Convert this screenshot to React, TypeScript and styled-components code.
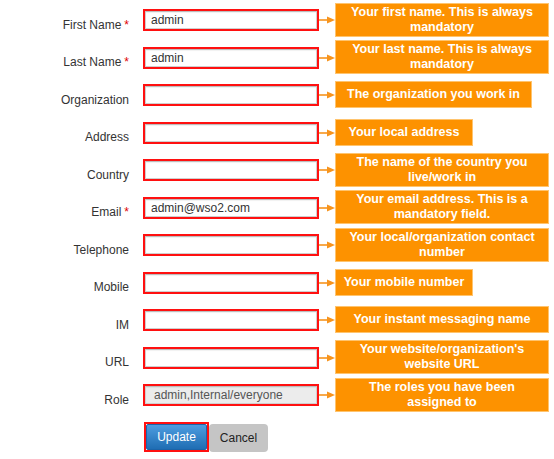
import React from "react";
import styled, { createGlobalStyle } from "styled-components";

const Global = createGlobalStyle`
  html, body { margin: 0; padding: 0; background: #fff; }
  body { font-family: "Liberation Sans", Arial, Helvetica, sans-serif; }
`;

const Page = styled.div`
  width: 554px;
  height: 459px;
  padding-top: 1.25px;
  box-sizing: border-box;
  overflow: hidden;
`;

const Row = styled.div`
  display: grid;
  grid-template-columns: 129px 14px 176px 16px auto;
  height: 37.5px;
  align-items: center;
`;

const Label = styled.label`
  grid-column: 1;
  text-align: right;
  font-size: 12px;
  color: #333;
  margin-top: 9px;
  white-space: nowrap;
`;

const Req = styled.span`
  color: #e00000;
  margin-left: 3px;
`;

const Highlight = styled.div`
  grid-column: 3;
  height: 22px;
  box-sizing: border-box;
  border: 2px solid #ff1010;
  display: flex;
`;

const Input = styled.div<{ $readonly?: boolean }>`
  flex: 1;
  box-sizing: border-box;
  border: 1px solid #cfcfcf;
  border-top-color: #bdbdbd;
  background: ${(p) => (p.$readonly ? "#ececec" : "#fff")};
  box-shadow: inset 0 1px 1px rgba(0, 0, 0, 0.06);
  font-size: 12px;
  line-height: 16px;
  padding: 0 ${(p) => (p.$readonly ? "8px" : "5px")};
  color: ${(p) => (p.$readonly ? "#555" : "#333")};
  white-space: nowrap;
  overflow: hidden;
`;

const ArrowWrap = styled.div`
  grid-column: 4;
  display: flex;
  align-items: center;
  height: 10px;
`;

const Tip = styled.div<{ $w: number; $lines: number }>`
  grid-column: 5;
  width: ${(p) => p.$w}px;
  height: ${(p) => (p.$lines === 2 ? 34 : 27)}px;
  margin-top: -1px;
  box-sizing: border-box;
  background: #fd9200;
  border: 1px solid #ffc46e;
  color: #fff;
  font-weight: bold;
  font-size: 12.5px;
  line-height: 15px;
  display: flex;
  align-items: center;
  justify-content: center;
  text-align: center;
  padding: 0 2px;
  white-space: nowrap;
`;

const Buttons = styled.div`
  display: flex;
  align-items: flex-start;
  margin: 8px 0 0 144px;
`;

const Frame = styled.div`
  border: 2px solid #ff1010;
  display: flex;
`;

const Button = styled.button<{ $primary?: boolean }>`
  font-family: "Liberation Sans", Arial, Helvetica, sans-serif;
  font-size: 12px;
  border: ${(p) => (p.$primary ? "1px solid #1c64a8" : "none")};
  border-radius: ${(p) => (p.$primary ? "2px" : "4px")};
  color: ${(p) => (p.$primary ? "#fff" : "#222")};
  background: ${(p) =>
    p.$primary ? "linear-gradient(#4d9de0, #1f6db3)" : "#c5c5c5"};
  width: ${(p) => (p.$primary ? 61 : 59)}px;
  height: ${(p) => (p.$primary ? 26 : 28)}px;
  margin-top: ${(p) => (p.$primary ? 0 : 2)}px;
  padding: 0;
  cursor: pointer;
`;

const Arrow = () => (
  <svg width="16" height="10" viewBox="0 0 16 10">
    <line x1="0" y1="5" x2="10" y2="5" stroke="#f7941d" strokeWidth="1.6" />
    <polygon points="8,1.5 16,5 8,8.5" fill="#f7941d" />
  </svg>
);

type Field = {
  label: string;
  req?: boolean;
  value?: string;
  readonly?: boolean;
  tip: string[];
  w: number;
};

const fields: Field[] = [
  { label: "First Name", req: true, value: "admin", tip: ["Your first name. This is always", "mandatory"], w: 214 },
  { label: "Last Name", req: true, value: "admin", tip: ["Your last name. This is always", "mandatory"], w: 214 },
  { label: "Organization", tip: ["The organization you work in"], w: 197 },
  { label: "Address", tip: ["Your local address"], w: 138 },
  { label: "Country", tip: ["The name of the country you", "live/work in"], w: 214 },
  { label: "Email", req: true, value: "admin@wso2.com", tip: ["Your email address. This is a", "mandatory field."], w: 214 },
  { label: "Telephone", tip: ["Your local/organization contact", "number"], w: 214 },
  { label: "Mobile", tip: ["Your mobile number"], w: 138 },
  { label: "IM", tip: ["Your instant messaging name"], w: 214 },
  { label: "URL", tip: ["Your website/organization's", "website URL"], w: 214 },
  { label: "Role", value: "admin,Internal/everyone", readonly: true, tip: ["The roles you have been", "assigned to"], w: 214 },
];

export default function App() {
  return (
    <>
      <Global />
      <Page>
        {fields.map((f) => (
          <Row key={f.label}>
            <Label>
              {f.label}
              {f.req && <Req>*</Req>}
            </Label>
            <Highlight>
              <Input $readonly={f.readonly}>{f.value ?? ""}</Input>
            </Highlight>
            <ArrowWrap>
              <Arrow />
            </ArrowWrap>
            <Tip $w={f.w} $lines={f.tip.length}>
              <span>
                {f.tip.map((t, i) => (
                  <React.Fragment key={i}>
                    {i > 0 && <br />}
                    {t}
                  </React.Fragment>
                ))}
              </span>
            </Tip>
          </Row>
        ))}
        <Buttons>
          <Frame>
            <Button $primary>Update</Button>
          </Frame>
          <Button>Cancel</Button>
        </Buttons>
      </Page>
    </>
  );
}
